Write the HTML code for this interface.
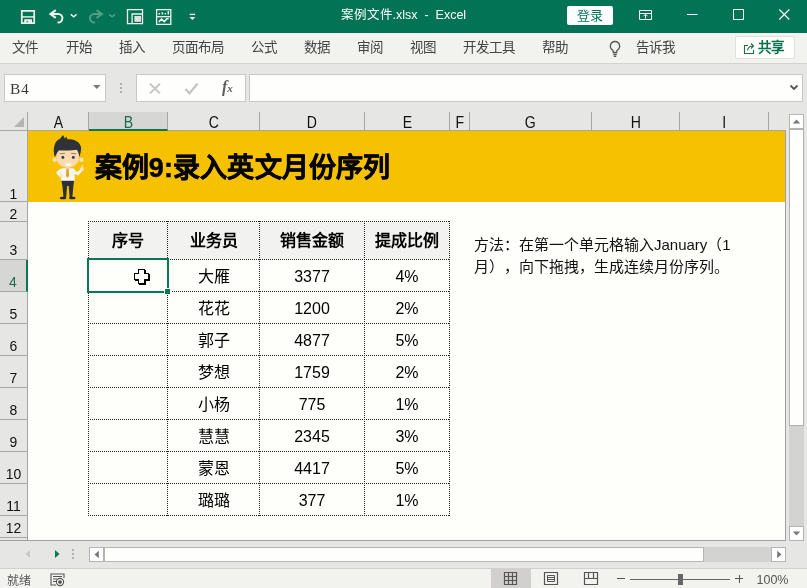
<!DOCTYPE html>
<html lang="zh-CN"><head><meta charset="utf-8">
<style>
*{box-sizing:border-box;margin:0;padding:0}
html,body{text-spacing-trim:space-all;width:807px;height:588px;overflow:hidden;background:#e6e6e4;font-family:"Liberation Sans",sans-serif;}
.abs{position:absolute}
#title{left:0;top:0;width:807px;height:33px;background:#027455;color:#fff}
#tabs{left:0;top:33px;width:807px;height:31px;background:#f2f2ee;border-bottom:1px solid #d2d2d2}
.tab{position:absolute;top:7px;font-size:13.500px;line-height:16px;color:#444;white-space:nowrap}
#fbar{left:0;top:64px;width:807px;height:48px;background:#e6e6e4}
.box{position:absolute;background:#fefffc;border:1px solid #c8c8c8}
#grid{left:0;top:112px;width:786px;height:429px;background:#fefffb;overflow:hidden;border-bottom:1px solid #9f9f9f}
.ch{position:absolute;top:0;height:19px;background:#e6e6e4;border-right:1px solid #a6a6a6;border-bottom:1px solid #a6a6a6;font-size:16px;color:#111;text-align:center;line-height:22px}
.ch b{display:inline-block;font-weight:normal;transform:scaleX(.88)}
.rh{position:absolute;left:0;width:28px;background:#e6e6e4;border-right:1px solid #a6a6a6;border-bottom:1px solid #a6a6a6;font-size:15px;color:#111;text-align:center}
.rh span{position:absolute;left:0;right:0;bottom:1px;line-height:17px;transform:scaleX(.93)}
.rh.d span{bottom:-1px}
.hl{position:absolute;height:1px;background-image:repeating-linear-gradient(90deg,#222 0 1px,transparent 1px 2px)}
.vl{position:absolute;width:1px;background-image:repeating-linear-gradient(180deg,#222 0 1px,transparent 1px 2px)}
.c{position:absolute;height:32px;line-height:36px;font-size:16px;color:#000;text-align:center;white-space:nowrap}
.hd{font-weight:bold;font-size:16px;color:#000;height:37px;line-height:38px}
#wrap{position:absolute;left:0;top:0;width:807px;height:588px;will-change:transform}
</style></head><body><div id="wrap">

<!-- TITLE BAR -->
<div id="title" class="abs">
  <svg class="abs" style="left:0;top:0" width="210" height="33" viewBox="0 0 210 33" fill="none" stroke="#f3f1ee" stroke-width="1.400">
    <!-- save -->
    <path d="M21.800 10.800h12.400v12.400H21.800z" stroke-width="1.700"/>
    <path d="M22 16.900h12" stroke-width="1.400"/>
    <path d="M24.200 19.300h7.800v4h-3.800v-2h-1.800v2h-2.200z" fill="#f3f1ee" stroke="none"/>
    <!-- undo -->
    <path d="M55.800 10.100l-5.400 3.900 5.400 3.900" stroke-width="2"/>
    <path d="M50.800 14h7.300a4.300 4.300 0 0 1 0 8.600h-.6" stroke-width="2"/>
    <path d="M70.800 14.400l2.900 2.500 2.900-2.500" stroke-width="1.400"/>
    <!-- redo (dim) -->
    <g stroke="#4f9f83">
      <path d="M96.600 10.100l5.400 3.900-5.400 3.900" stroke-width="2"/>
      <path d="M101.600 14h-7.300a4.300 4.300 0 0 0 0 8.600h.6" stroke-width="2"/>
      <path d="M109.200 14.400l2.900 2.500 2.900-2.500" stroke-width="1.400"/>
    </g>
    <!-- form icon -->
    <path d="M127.500 9.600h15v14h-15z" stroke-width="1.300"/>
    <path d="M142.500 14h-10.400v9.600" stroke-width="1.300"/>
    <rect x="134.400" y="16" width="6.600" height="5.800" fill="#e3e1dd" stroke="none"/>
    <!-- chart icon -->
    <path d="M156.600 9.600h14.200v14.800h-14.200z" stroke-width="1.300"/><path d="M156.600 16.700h14.200" stroke-width="1.300"/>
    <path d="M159.300 14.500v-1.600M162.300 14.500v-2.200M165.300 14.500v-1.600M168.300 14.500v-3.500" stroke-width="1.500"/>
    <path d="M158.800 22l2.700-2.800 2.800 2.400 2.600-2.800h1.800" stroke-width="1.600"/>
    <!-- customize -->
    <path d="M189.700 14.400h5.400" stroke-width="1.300"/><path d="M189.500 17h5.800l-2.900 3z" fill="#f3f1ee" stroke="none"/>
  </svg>
  <div class="abs" style="left:340.500px;top:7px;font-size:12.500px;line-height:16px;white-space:nowrap">案例文件.xlsx&nbsp; -&nbsp; Excel</div>
  <div class="abs" style="left:567px;top:6px;width:46px;height:19px;background:#fff;color:#027455;font-size:13px;text-align:center;line-height:19px;border-radius:2px">登录</div>
  <svg class="abs" style="left:630px;top:0" width="177" height="33" viewBox="0 0 177 33" fill="none" stroke="#fff" stroke-width="1">
    <!-- ribbon display -->
    <path d="M9.5 10.5h12v9h-12z"/><path d="M9.5 13.5h12"/><path d="M15.5 18.5v-4M13.5 16.2l2-2 2 2"/>
    <!-- min -->
    <path d="M57 14.5h10.5"/>
    <!-- max -->
    <path d="M103.5 9.5h10v10h-10z"/>
    <!-- close -->
    <path d="M149.3 9.5l10 10M159.3 9.5l-10 10" stroke-width="1.1"/>
  </svg>
</div>

<!-- TABS -->
<div id="tabs" class="abs">
  <div class="tab" style="left:12px">文件</div>
  <div class="tab" style="left:66px">开始</div>
  <div class="tab" style="left:119px">插入</div>
  <div class="tab" style="left:172px">页面布局</div>
  <div class="tab" style="left:251px">公式</div>
  <div class="tab" style="left:304px">数据</div>
  <div class="tab" style="left:357px">审阅</div>
  <div class="tab" style="left:410px">视图</div>
  <div class="tab" style="left:463px">开发工具</div>
  <div class="tab" style="left:542px">帮助</div>
  <svg class="abs" style="left:606px;top:6px" width="18" height="20" viewBox="0 0 18 20" fill="none" stroke="#555" stroke-width="1.3"><path d="M9 2.5a4.6 4.6 0 0 0-2.6 8.4c.6.5.9 1.200.9 2v.6h3.400v-.6c0-.8.300-1.500.9-2A4.600 4.600 0 0 0 9 2.500z"/><path d="M7.300 15.500h3.400M7.800 17.300h2.400"/></svg>
  <div class="tab" style="left:636px">告诉我</div>
  <div class="abs" style="left:735px;top:3px;width:60px;height:23px;background:#fefefc;border:1px solid #e1dfdb;border-radius:2px"></div>
  <svg class="abs" style="left:743px;top:8px" width="14" height="14" viewBox="0 0 14 14" fill="none" stroke="#1e6b48" stroke-width="1.1"><path d="M5 4.500H1.500v8h9V9"/><path d="M4.500 9.500c.5-3 2.500-4.500 5.500-4.500M8 2.500l2.500 2.500L8 7.500"/></svg>
  <div class="tab" style="left:758px;color:#0a7050;font-weight:bold">共享</div>
</div>

<!-- FORMULA BAR -->
<div id="fbar" class="abs">
  <div class="box" style="left:4px;top:10px;width:102px;height:28px"></div>
  <div class="abs" style="left:10px;top:17px;font-size:15.500px;line-height:16px;color:#3a3a3a;font-family:'Liberation Serif',serif;letter-spacing:0.600px">B4</div>
  <svg class="abs" style="left:92px;top:20px" width="10" height="6"><path d="M1 1h7.500L4.750 5z" fill="#777"/></svg>
  <div class="abs" style="left:120px;top:19px;width:2px;height:2px;background:#b0b0b0;box-shadow:0 4px 0 #b0b0b0,0 8px 0 #b0b0b0"></div>
  <div class="box" style="left:136px;top:10px;width:110px;height:28px"></div>
  <svg class="abs" style="left:136px;top:10px" width="110" height="28" viewBox="0 0 110 28" fill="none">
    <path d="M14 9.800l10 9.600M24 9.800l-10 9.600" stroke="#c6c6c6" stroke-width="2"/>
    <path d="M49.500 15l4 4.300 8-9.500" stroke="#c6c6c6" stroke-width="2.400"/>
  </svg>
  <div class="abs" style="left:222px;top:15px;font-family:'Liberation Serif',serif;font-style:italic;font-weight:bold;font-size:16px;line-height:16px;color:#606060;white-space:nowrap">f<span style="font-size:11px">x</span></div>
  <div class="box" style="left:249px;top:10px;width:554px;height:28px"></div>
  <svg class="abs" style="left:789px;top:20px" width="10" height="8"><path d="M1.500 1.500l3.500 3.500 3.500-3.500" fill="none" stroke="#555" stroke-width="1.800"/></svg>
</div>

<!-- GRID -->
<div id="grid" class="abs">
  <div class="abs" style="left:785px;top:18px;width:1px;height:411px;background:#9fa0a6;z-index:5"></div>
  <!-- banner -->
  <div class="abs" style="left:28px;top:19px;width:758px;height:71px;background:#f5c100"></div>
  <div class="abs" style="left:94.500px;top:38px;font-size:27px;line-height:36px;font-weight:bold;color:#050505;white-space:nowrap;letter-spacing:0.150px;-webkit-text-stroke:0.500px #050505">案例9:录入英文月份序列</div>


  <!-- character -->
  <svg class="abs" style="left:48px;top:19px" width="54" height="71" viewBox="48 131 54 71">
    <!-- bulb -->
    <g fill="none" stroke="#f9d560" stroke-width="0.900" opacity="0.400">
      <path d="M89 147.500a5 5 0 0 0-3 9c.8.700 1.200 1.500 1.300 2.500h3.400c.100-1 .5-1.800 1.300-2.500a5 5 0 0 0-3-9z"/>
      <path d="M87.600 160.300h2.800M92.300 146.300l1.300-2.600M94.300 148.600l2.300-1.600M90 145.800l.3-2.500"/>
      <path d="M89 151v3" />
    </g>
    <!-- legs -->
    <path d="M61.300 180.300h12.900l-.8 5.500-1 11.200h-2.800l-.9-11h-1.600l-.9 11h-2.800l-1-11.200z" fill="#2e3035"/>
    <ellipse cx="63" cy="198" rx="3.300" ry="1.300" fill="#26282c"/><ellipse cx="72.300" cy="198" rx="3.300" ry="1.300" fill="#26282c"/>
    <!-- right arm (viewer right) -->
    <path d="M73 169.200l4.500 2.800 3-3 1.800 1.800-4 4.700-5.300-2z" fill="#f6f6f4"/>
    <path d="M80 169.500c0-1.500.8-2.200 1.500-2.500l.3-2.200c.9-.2 1.300.5 1.200 1.500l-.1 1c.8.300 1.200 1 1 2.200-.2 1.300-1.200 2-2.400 1.800z" fill="#fde2bd"/>
    <!-- body -->
    <path d="M60.500 169c2-1.200 12-1.200 14 0l.3 11.700H61z" fill="#f6f6f4"/>
    <!-- left arm -->
    <path d="M61 168.800c-2.200.8-4.200 2.500-4.800 4.400l3.300 3.600 2.300-1.500-1.800-2.300 1.500-1z" fill="#f6f6f4"/>
    <circle cx="61.200" cy="176.200" r="1.900" fill="#fde2bd"/>
    <!-- tie -->
    <path d="M66.500 168.300h2l.6 7.800-1.600 1.700-1.600-1.700z" fill="#e2a616"/>
    <!-- neck -->
    <rect x="65.500" y="165.500" width="4.500" height="3.200" fill="#f3c99c"/>
    <!-- ears -->
    <circle cx="54.600" cy="159.800" r="2.200" fill="#fde0b8"/><circle cx="81.400" cy="159.800" r="2.200" fill="#fde0b8"/>
    <!-- face -->
    <path d="M56.500 153c0-4 5-6 11.200-6s11.300 2 11.300 6v5c0 5.500-5 9.600-11.300 9.600S56.500 163.500 56.500 158z" fill="#fcd9ae"/>
    <!-- hair -->
    <path d="M54.900 157c-1.300-3.500-1.500-7.500-.7-10.500.7-3 1.800-4.700 3-5.900l3-2.200 2.800-3.500 1.800 3.500 1.600-1.600 1.200 2.600c2.400-.4 4.900-.1 7 .8 2.400 1 4.200 2.400 5.200 4 1.200 1.800 1.500 3.800 1.200 5.800-.2 2.500-.8 4.800-1.700 7-.3-2.700-1.100-5.300-2.500-7.200-3.800.8-12.800 1-17.600.4-1.400 1.300-2.400 3-2.900 4.300z" fill="#2f3237"/>
    <!-- brows -->
    <path d="M59.800 153.800l5.200-.5M71 153.300l5.200.5" stroke="#a07f5a" stroke-width="1.100" fill="none"/>
    <!-- eyes -->
    <circle cx="62.700" cy="157.400" r="2" fill="#d9d2c6"/><circle cx="73.500" cy="157.400" r="2" fill="#d9d2c6"/>
    <circle cx="62.900" cy="157.400" r="1.400" fill="#33363b"/><circle cx="73.300" cy="157.400" r="1.400" fill="#33363b"/>
    <!-- mouth -->
    <path d="M65.300 163.300c1.800.6 4.200.6 6 0-.3 2-1.500 3-3 3s-2.700-1-3-3z" fill="#fff"/>
  </svg>
  <!-- table header bg -->
  <div class="abs" style="left:89px;top:110px;width:360px;height:37px;background:#f2f2f0"></div>

  <!-- column headers -->
  <div class="ch" style="left:0;width:28px"></div>
  <svg class="abs" style="left:13px;top:4px" width="12" height="12"><path d="M11 1v10H1z" fill="#b4b4b4"/></svg>
  <div class="ch" style="left:28px;width:61px"><b>A</b></div>
  <div class="ch" style="left:89px;width:79px;background:#d6d6d4;color:#1e6b48;border-bottom:2px solid #0a7855"><b>B</b></div>
  <div class="ch" style="left:168px;width:92px"><b>C</b></div>
  <div class="ch" style="left:260px;width:105px"><b>D</b></div>
  <div class="ch" style="left:365px;width:85px"><b>E</b></div>
  <div class="ch" style="left:450px;width:20px"><b>F</b></div>
  <div class="ch" style="left:470px;width:122px"><b>G</b></div>
  <div class="ch" style="left:592px;width:88px"><b>H</b></div>
  <div class="ch" style="left:680px;width:89px"><b>I</b></div>
  <div class="ch" style="left:769px;width:20px;border-right:0"></div>

  <!-- row headers -->
  <div class="rh d" style="top:19px;height:71px"><span>1</span></div>
  <div class="rh d" style="top:90px;height:20px"><span>2</span></div>
  <div class="rh" style="top:110px;height:38px"><span>3</span></div>
  <div class="rh" style="top:148px;height:32px;background:#d6d6d4;color:#1e6b48;border-right:2px solid #0a7855"><span>4</span></div>
  <div class="rh" style="top:180px;height:32px"><span>5</span></div>
  <div class="rh" style="top:212px;height:32px"><span>6</span></div>
  <div class="rh" style="top:244px;height:32px"><span>7</span></div>
  <div class="rh" style="top:276px;height:32px"><span>8</span></div>
  <div class="rh" style="top:308px;height:32px"><span>9</span></div>
  <div class="rh" style="top:340px;height:32px"><span>10</span></div>
  <div class="rh" style="top:372px;height:32px"><span>11</span></div>
  <div class="rh" style="top:404px;height:22px"><span>12</span></div>
  <div class="rh" style="top:426px;height:10px"></div>

  <!-- dotted grid lines -->
  <div class="hl" style="left:88px;top:109px;width:362px"></div>
  <div class="hl" style="left:88px;top:147px;width:362px"></div>
  <div class="hl" style="left:88px;top:179px;width:362px"></div>
  <div class="hl" style="left:88px;top:211px;width:362px"></div>
  <div class="hl" style="left:88px;top:243px;width:362px"></div>
  <div class="hl" style="left:88px;top:275px;width:362px"></div>
  <div class="hl" style="left:88px;top:307px;width:362px"></div>
  <div class="hl" style="left:88px;top:339px;width:362px"></div>
  <div class="hl" style="left:88px;top:371px;width:362px"></div>
  <div class="hl" style="left:88px;top:403px;width:362px"></div>
  <div class="vl" style="left:88px;top:109px;height:295px"></div>
  <div class="vl" style="left:167px;top:109px;height:295px"></div>
  <div class="vl" style="left:259px;top:109px;height:295px"></div>
  <div class="vl" style="left:364px;top:109px;height:295px"></div>
  <div class="vl" style="left:449px;top:109px;height:295px"></div>

  <!-- header cells -->
  <div class="c hd" style="left:89px;top:110px;width:78px">序号</div>
  <div class="c hd" style="left:168px;top:110px;width:91px">业务员</div>
  <div class="c hd" style="left:260px;top:110px;width:104px">销售金额</div>
  <div class="c hd" style="left:365px;top:110px;width:84px">提成比例</div>

  <!-- data -->
  <div class="c" style="left:168px;top:147px;width:91px">大雁</div><div class="c" style="left:260px;top:147px;width:104px">3377</div><div class="c" style="left:365px;top:147px;width:84px">4%</div>
  <div class="c" style="left:168px;top:179px;width:91px">花花</div><div class="c" style="left:260px;top:179px;width:104px">1200</div><div class="c" style="left:365px;top:179px;width:84px">2%</div>
  <div class="c" style="left:168px;top:211px;width:91px">郭子</div><div class="c" style="left:260px;top:211px;width:104px">4877</div><div class="c" style="left:365px;top:211px;width:84px">5%</div>
  <div class="c" style="left:168px;top:243px;width:91px">梦想</div><div class="c" style="left:260px;top:243px;width:104px">1759</div><div class="c" style="left:365px;top:243px;width:84px">2%</div>
  <div class="c" style="left:168px;top:275px;width:91px">小杨</div><div class="c" style="left:260px;top:275px;width:104px">775</div><div class="c" style="left:365px;top:275px;width:84px">1%</div>
  <div class="c" style="left:168px;top:307px;width:91px">慧慧</div><div class="c" style="left:260px;top:307px;width:104px">2345</div><div class="c" style="left:365px;top:307px;width:84px">3%</div>
  <div class="c" style="left:168px;top:339px;width:91px">蒙恩</div><div class="c" style="left:260px;top:339px;width:104px">4417</div><div class="c" style="left:365px;top:339px;width:84px">5%</div>
  <div class="c" style="left:168px;top:371px;width:91px">璐璐</div><div class="c" style="left:260px;top:371px;width:104px">377</div><div class="c" style="left:365px;top:371px;width:84px">1%</div>

  <!-- selection -->
  <div class="abs" style="left:87px;top:146px;width:82px;height:35px;border:2px solid #0a7855"></div>
  <div class="abs" style="left:164px;top:176px;width:7px;height:7px;background:#0a7855;border:1px solid #fefffb"></div>


  <!-- cursor -->
  <svg class="abs" style="left:134px;top:157px" width="16" height="16" viewBox="134 269 16 16" shape-rendering="crispEdges">
    <path d="M139 270h7v15h-7zM135 274h15v7h-15z" fill="#000"/>
    <path d="M138 269h7v15h-7zM134 273h15v7h-15z" fill="#000"/>
    <path d="M139 270h5v13h-5zM135 274h13v5h-13z" fill="#fff"/>
  </svg>
  <!-- note text -->
  <div class="abs" style="left:474px;top:122px;width:290px;font-size:15px;line-height:22px;color:#111;white-space:nowrap">方法：在第一个单元格输入January（1<br>月），向下拖拽，生成连续月份序列。</div>
</div>

<!-- VERTICAL SCROLLBAR -->
<div class="abs" style="left:789px;top:128px;width:15px;height:400px;background:#d3d3d1"></div>
<div class="abs" style="left:789px;top:114px;width:15px;height:15px;background:#fff;border:1px solid #b4b4b4"></div>
<svg class="abs" style="left:792px;top:119px" width="9" height="5"><path d="M.8 4.500h7.400L4.500 .5z" fill="#777"/></svg>
<div class="abs" style="left:789px;top:129px;width:15px;height:297px;background:#fefffc;border:1px solid #b0b0b0"></div>
<div class="abs" style="left:789px;top:526px;width:15px;height:15px;background:#fff;border:1px solid #b4b4b4"></div>
<svg class="abs" style="left:792px;top:531px" width="9" height="5"><path d="M.8 .5h7.400L4.500 4.500z" fill="#777"/></svg>

<!-- BOTTOM BAR -->
<svg class="abs" style="left:20px;top:548px" width="60" height="12"><path d="M10 2v8L5.500 6z" fill="#c8c8c8"/><path d="M35 2v8l4.500-4z" fill="#0a7855"/></svg>
<div class="abs" style="left:72px;top:549px;width:2px;height:2px;background:#b0b0b0;box-shadow:0 4px 0 #b0b0b0,0 8px 0 #b0b0b0"></div>
<div class="abs" style="left:104px;top:547px;width:668px;height:15px;background:#d3d3d1"></div>
<div class="abs" style="left:89px;top:547px;width:15px;height:15px;background:#fff;border:1px solid #b4b4b4"></div>
<svg class="abs" style="left:94px;top:550px" width="5" height="9"><path d="M4.800 .8v7.400L.5 4.500z" fill="#777"/></svg>
<div class="abs" style="left:104px;top:547px;width:600px;height:15px;background:#fefffc;border:1px solid #b4b4b4"></div>
<div class="abs" style="left:771px;top:547px;width:15px;height:15px;background:#fff;border:1px solid #b4b4b4"></div>
<svg class="abs" style="left:777px;top:550px" width="5" height="9"><path d="M.2 .8v7.400l4.300-3.700z" fill="#777"/></svg>

<!-- STATUS BAR -->
<div class="abs" style="left:0;top:568px;width:807px;height:20px;background:#f2f2ee;border-top:1px solid #d0d0d0"></div>
<div class="abs" style="left:7px;top:574px;font-size:12px;line-height:14px;color:#555">就绪</div>
<svg class="abs" style="left:50px;top:573px" width="16" height="14" viewBox="0 0 16 14" fill="none" stroke="#555" stroke-width="1.100"><path d="M14 5V1H1v11h5"/><path d="M3 3.500h9M3 6h4M3 8.500h3"/><circle cx="10" cy="9" r="3.600"/><circle cx="10" cy="9" r="1.300" fill="#555"/></svg>
<div class="abs" style="left:491px;top:569px;width:40px;height:19px;background:#d2d0ce"></div>
<svg class="abs" style="left:491px;top:569px" width="120" height="19" viewBox="0 0 120 19" fill="none" stroke="#555" stroke-width="1.200">
  <path d="M13.500 3.500h12v12h-12zM17.500 3.500v12M21.500 3.500v12M13.500 7.500h12M13.500 11.500h12"/>
  <path d="M53.500 3.500h13v12h-13z"/><path d="M56.500 6.500h7v6h-7zM56.500 8.500h7M56.500 10.500h7" stroke-width="1"/>
  <path d="M93.500 3.500h13v12h-13z"/><path d="M97.500 3.500v6h5v-6M93.500 9.500h13" />
</svg>
<div class="abs" style="left:617px;top:578px;width:8px;height:1px;background:#555"></div>
<div class="abs" style="left:630px;top:579px;width:100px;height:1px;background:#666"></div>
<div class="abs" style="left:678px;top:574px;width:5px;height:11px;background:#666"></div>
<div class="abs" style="left:735px;top:578px;width:8px;height:1px;background:#555"></div>
<div class="abs" style="left:738.500px;top:575px;width:1px;height:8px;background:#555"></div>
<div class="abs" style="left:756.500px;top:573px;font-size:12.500px;line-height:15px;color:#555">100%</div>
</div></body></html>
